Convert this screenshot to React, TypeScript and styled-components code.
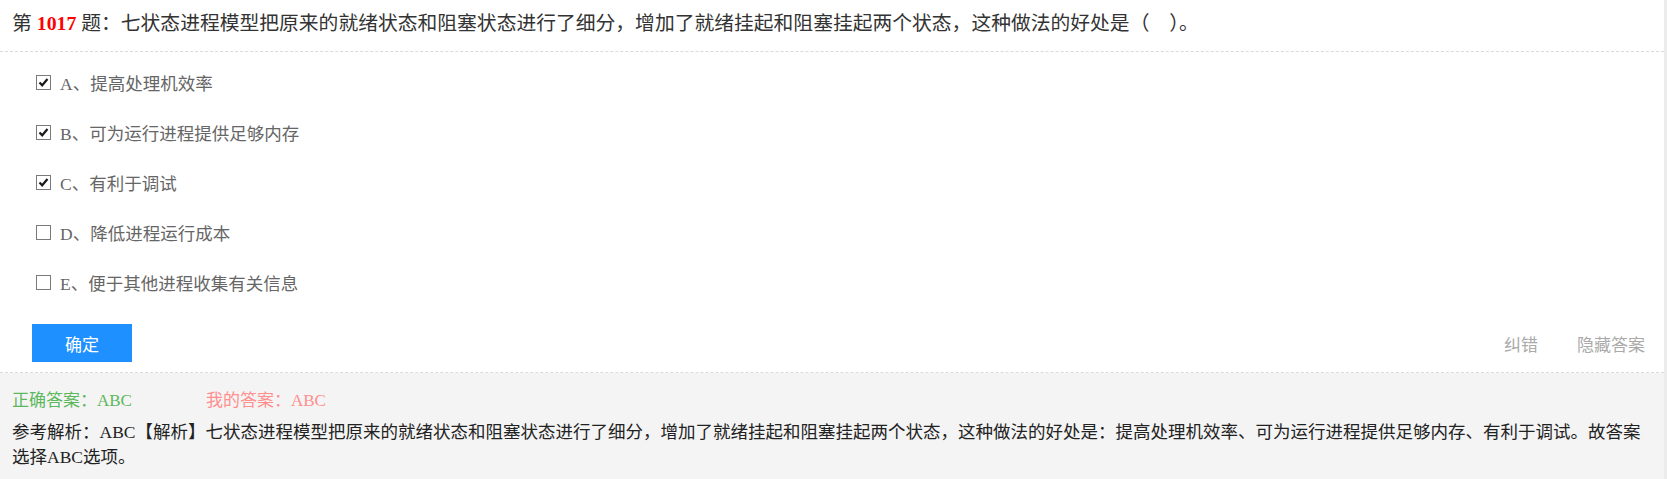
import React from "react";
import styled, { createGlobalStyle } from "styled-components";

const GlobalStyle = createGlobalStyle`
  html, body { margin: 0; padding: 0; background: #fff; }
  body {
    font-family: "Liberation Serif", "Noto Sans CJK SC", serif;
  }
`;

const Page = styled.div`
  width: 1664px;
  min-height: 479px;
  border-right: 3px solid #ececec;
  display: flex;
  flex-direction: column;
`;

const Question = styled.div`
  padding: 8px 12px 13px;
  line-height: 30px;
  font-size: 19.8px;
  color: #333;
  border-bottom: 1px dashed #dadada;
  white-space: nowrap;
`;

const Num = styled.span`
  color: #f00;
  font-weight: bold;
`;

const OptionList = styled.div`
  display: flex;
  flex-direction: column;
  padding: 5px 0 0 36px;
`;

const OptionRow = styled.label`
  height: 50px;
  display: flex;
  align-items: center;
  gap: 9px;
  font-size: 17.5px;
  color: #666;
`;

const CheckBox = styled.span`
  box-sizing: border-box;
  width: 15px;
  height: 15px;
  border: 1px solid #7a7a7a;
  background: #fff;
  display: flex;
  align-items: center;
  justify-content: center;
  flex: none;
`;

const ActionBar = styled.div`
  display: flex;
  align-items: center;
  justify-content: space-between;
  padding: 17px 19px 10px 32px;
  border-bottom: 1px dashed #dadada;
`;

const SubmitButton = styled.button`
  width: 100px;
  height: 38px;
  padding: 0;
  border: none;
  background: #1e90ff;
  color: #fff;
  font-family: "Noto Sans CJK SC", sans-serif;
  font-size: 17px;
  cursor: pointer;
`;

const Links = styled.div`
  display: flex;
  gap: 39px;
`;

const LinkText = styled.span`
  font-family: "Noto Sans CJK SC", sans-serif;
  font-size: 17px;
  color: #aaa;
  cursor: pointer;
`;

const AnswerPanel = styled.div`
  flex: 1;
  background: #f4f4f4;
  padding: 15px 12px 9px 12px;
`;

const AnswerRow = styled.div`
  display: flex;
  line-height: 25px;
  font-size: 17px;
`;

const AnswerItem = styled.span<{ $color: string; $gap?: number }>`
  color: ${(p) => p.$color};
  margin-right: ${(p) => p.$gap ?? 0}px;
`;

const Analysis = styled.div`
  margin-top: 7px;
  line-height: 25px;
  font-size: 17.5px;
  color: #222;
`;

const options = [
  { key: "A", text: "提高处理机效率", checked: true },
  { key: "B", text: "可为运行进程提供足够内存", checked: true },
  { key: "C", text: "有利于调试", checked: true },
  { key: "D", text: "降低进程运行成本", checked: false },
  { key: "E", text: "便于其他进程收集有关信息", checked: false },
];

const Check = () => (
  <svg width="11" height="11" viewBox="0 0 11 11">
    <path d="M1.5 5.5 L4.2 8.3 L9.5 2" fill="none" stroke="#1a1a1a" strokeWidth="2.2" />
  </svg>
);

export default function App() {
  return (
    <>
      <GlobalStyle />
      <Page>
        <Question>
          第 <Num>1017</Num> 题：七状态进程模型把原来的就绪状态和阻塞状态进行了细分，增加了就绪挂起和阻塞挂起两个状态，这种做法的好处是（　）。
        </Question>
        <OptionList>
          {options.map((o) => (
            <OptionRow key={o.key}>
              <CheckBox>{o.checked && <Check />}</CheckBox>
              <span>
                {o.key}、{o.text}
              </span>
            </OptionRow>
          ))}
        </OptionList>
        <ActionBar>
          <SubmitButton>确定</SubmitButton>
          <Links>
            <LinkText>纠错</LinkText>
            <LinkText>隐藏答案</LinkText>
          </Links>
        </ActionBar>
        <AnswerPanel>
          <AnswerRow>
            <AnswerItem $color="#5cb85c" $gap={74}>正确答案：ABC</AnswerItem>
            <AnswerItem $color="#ff8f8f">我的答案：ABC</AnswerItem>
          </AnswerRow>
          <Analysis>
            参考解析：ABC【解析】七状态进程模型把原来的就绪状态和阻塞状态进行了细分，增加了就绪挂起和阻塞挂起两个状态，这种做法的好处是：提高处理机效率、可为运行进程提供足够内存、有利于调试。故答案选择ABC选项。
          </Analysis>
        </AnswerPanel>
      </Page>
    </>
  );
}
